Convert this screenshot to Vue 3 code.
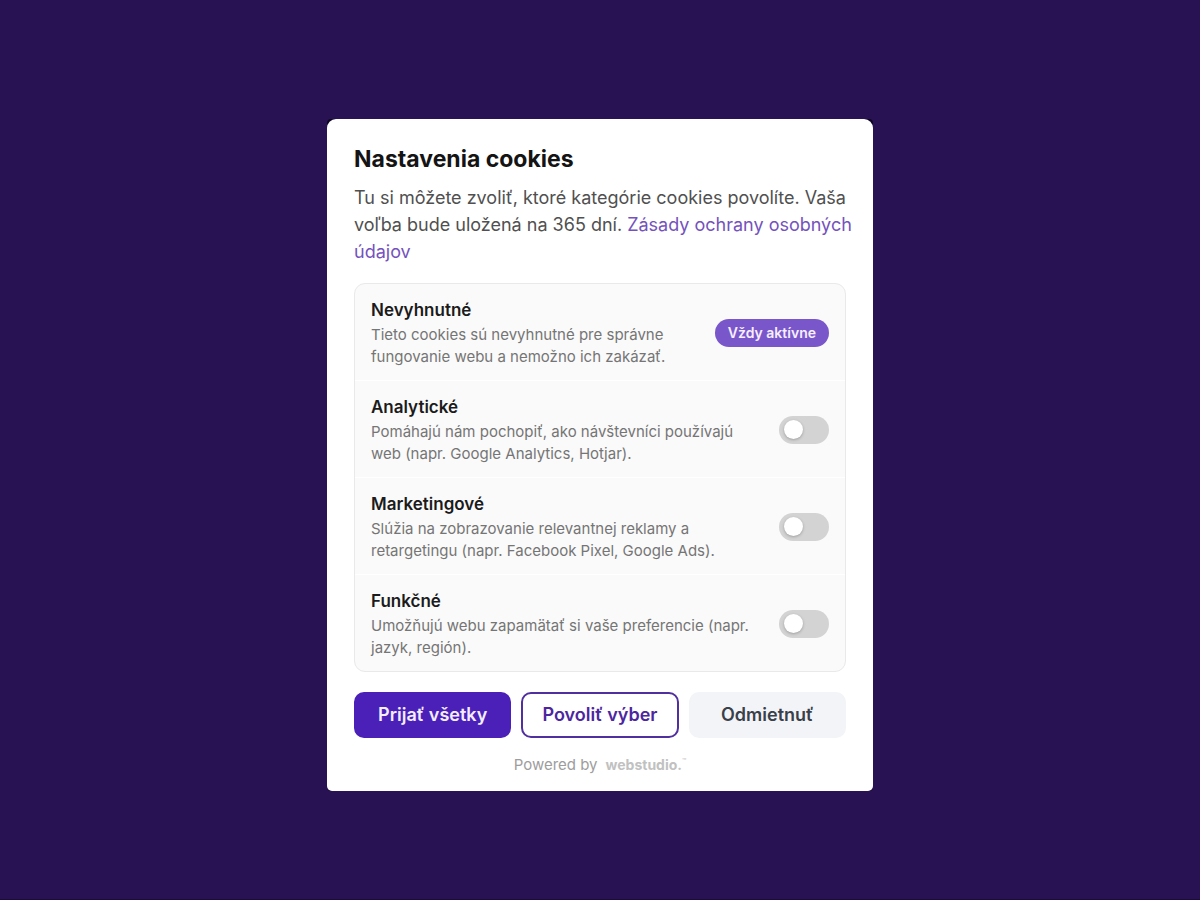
<script setup>
import { reactive } from 'vue'

const categories = reactive([
  { id: 'necessary', name: 'Nevyhnutné', text: 'Tieto cookies sú nevyhnutné pre správne fungovanie webu a nemožno ich zakázať.', locked: true, on: true },
  { id: 'analytics', name: 'Analytické', text: 'Pomáhajú nám pochopiť, ako návštevníci používajú web (napr. Google Analytics, Hotjar).', locked: false, on: false },
  { id: 'marketing', name: 'Marketingové', text: 'Slúžia na zobrazovanie relevantnej reklamy a retargetingu (napr. Facebook Pixel, Google Ads).', locked: false, on: false },
  { id: 'functional', name: 'Funkčné', text: 'Umožňujú webu zapamätať si vaše preferencie (napr. jazyk, región).', locked: false, on: false }
])

function setAll(value) {
  categories.forEach((c) => { if (!c.locked) c.on = value })
}
</script>

<template>
  <main class="page">
    <div class="frame">
      <section class="dialog" role="dialog" aria-labelledby="cookie-title">
        <h1 id="cookie-title" class="title">Nastavenia cookies</h1>
        <p class="intro">
          Tu si môžete zvoliť, ktoré kategórie cookies povolíte. Vaša voľba bude uložená na 365 dní.
          <a href="#">Zásady ochrany osobných údajov</a>
        </p>

        <div class="list">
          <div v-for="c in categories" :key="c.id" class="row">
            <div class="info">
              <label v-if="!c.locked" class="name" :for="c.id">{{ c.name }}</label>
              <span v-else class="name">{{ c.name }}</span>
              <p class="text">{{ c.text }}</p>
            </div>
            <span v-if="c.locked" class="badge">Vždy aktívne</span>
            <input v-else :id="c.id" v-model="c.on" class="switch" type="checkbox">
          </div>
        </div>

        <div class="actions">
          <button type="button" class="btn primary" @click="setAll(true)">Prijať všetky</button>
          <button type="button" class="btn outline">Povoliť výber</button>
          <button type="button" class="btn quiet" @click="setAll(false)">Odmietnuť</button>
        </div>

        <footer class="credit">
          <span>Powered by</span>
          <span class="brand">webstudio.<span class="tm">™</span></span>
        </footer>
      </section>
    </div>
  </main>
</template>

<style>
body {
  margin: 0;
  background: #281253;
}
</style>

<style scoped>
.page {
  box-sizing: border-box;
  min-height: 100vh;
  display: flex;
  align-items: center;
  justify-content: center;
  padding: 20px 16px 10px;
  background: #281253;
  border-bottom: 1px solid #1a0b3c;
  font-family: Inter, "Liberation Sans", sans-serif;
}
.frame {
  width: 100%;
  max-width: 546px;
  background: #0d0620;
  border-radius: 4px;
}
.dialog {
  padding: 26px 27px 16px;
  background: #fff;
  border-radius: 9px 9px 5px 5px;
}
.title {
  margin: 0;
  font-size: 23px;
  line-height: 28px;
  font-weight: 700;
  color: #141414;
}
.intro {
  margin: 11px -8px 18px 0;
  font-size: 18px;
  line-height: 27px;
  color: #505050;
}
.intro a {
  color: #7452bd;
  text-decoration: none;
}
.list {
  background: #fafafa;
  border: 1px solid #e9e9ea;
  border-radius: 11px;
}
.row {
  display: flex;
  align-items: center;
  justify-content: space-between;
  gap: 16px;
  padding: 14px 16px 12px;
}
.row + .row {
  border-top: 1px solid #fff;
}
.info {
  flex: 1;
}
.name {
  display: block;
  font-size: 17px;
  line-height: 24px;
  font-weight: 600;
  color: #1b1b1b;
}
.text {
  margin: 2px 0 0;
  font-size: 15px;
  line-height: 22px;
  color: #757575;
}
.badge {
  padding: 0 13px;
  border-radius: 14px;
  background: #7a56cb;
  color: #f5efff;
  font-size: 14px;
  line-height: 28px;
  font-weight: 600;
  white-space: nowrap;
}
.switch {
  appearance: none;
  flex: none;
  display: flex;
  align-items: center;
  box-sizing: border-box;
  width: 50px;
  height: 28px;
  margin: 0;
  padding: 0 5px;
  border-radius: 14px;
  background: #d3d3d3;
  cursor: pointer;
}
.switch::before {
  content: "";
  width: 19px;
  height: 19px;
  border-radius: 50%;
  background: #fff;
  box-shadow: 0 1px 3px rgba(0, 0, 0, 0.25);
}
.switch:checked {
  justify-content: flex-end;
  background: #4b20b8;
}
.actions {
  display: grid;
  grid-template-columns: repeat(3, 1fr);
  gap: 10px;
  margin-top: 20px;
}
.btn {
  height: 46px;
  padding: 0 8px;
  border: 2px solid transparent;
  border-radius: 10px;
  font-family: inherit;
  font-size: 18px;
  font-weight: 600;
  cursor: pointer;
}
.primary {
  background: #4b20b8;
  border-color: #4b20b8;
  color: #f3edff;
}
.outline {
  background: #fff;
  border-color: #50309e;
  color: #4d269f;
}
.quiet {
  background: #f3f4f7;
  border-color: #f3f4f7;
  color: #394049;
}
.credit {
  display: flex;
  justify-content: center;
  gap: 8px;
  margin-top: 17px;
  font-size: 15px;
  line-height: 20px;
  color: #9d9d9d;
}
.brand {
  display: flex;
  font-size: 14px;
  font-weight: 700;
  color: #c1c1c1;
}
.tm {
  font-size: 7px;
  line-height: 13px;
  font-weight: 400;
}
</style>
